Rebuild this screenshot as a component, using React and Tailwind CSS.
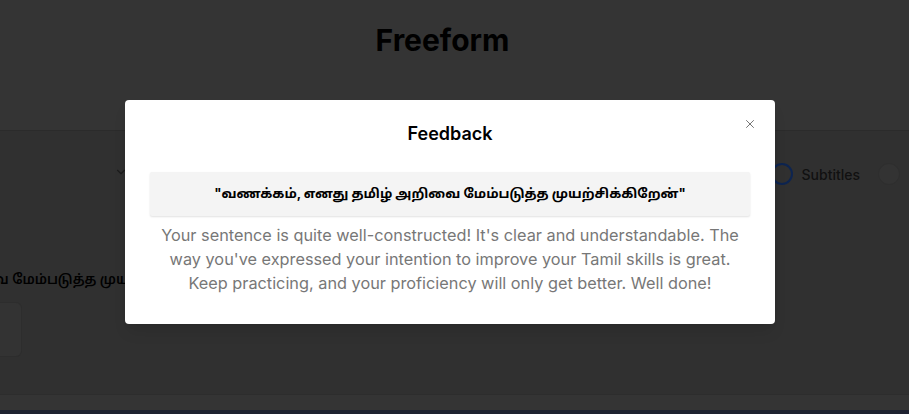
import { X, ChevronDown } from 'lucide-react';

const sentence = 'வணக்கம், எனது தமிழ் அறிவை மேம்படுத்த முயற்சிக்கிறேன்';
const tamilFont = { fontFamily: 'Inter, "Noto Sans Tamil", "Noto Sans", sans-serif' };

const FeedbackModal = () => (
    <div className="absolute inset-0 flex items-start justify-start pl-[125px] pt-[100px]">
        <div className="relative w-[650px] h-[224px] bg-white rounded-[4px] px-[25px] shadow-lg">
            <button className="absolute right-[18px] top-[17px] text-[#6b6b6b]">
                <X className="w-[14px] h-[14px]" strokeWidth={1.6} />
            </button>
            <h2 className="pt-[22px] text-center text-[18px] leading-[24px] font-semibold text-black">
                Feedback
            </h2>
            <div className="mt-[26px] h-[44px] flex items-center justify-center bg-[#f4f4f4] rounded-[2px] shadow-[0_1px_2px_rgba(0,0,0,0.12)]">
                <span className="whitespace-nowrap text-[13.2px] font-bold text-black" style={tamilFont}>
                    "{sentence}"
                </span>
            </div>
            <p className="mt-[7px] text-center text-[16.3px] leading-[24px] text-[#777777]">
                Your sentence is quite well-constructed! It's clear and understandable. The way you've expressed your intention to improve your Tamil skills is great. Keep practicing, and your proficiency will only get better. Well done!
            </p>
        </div>
    </div>
);

export default function App() {
    return (
        <div className="relative h-[414px] w-full overflow-hidden bg-[#303030] flex flex-col font-['Inter',sans-serif]">
            {/* ── Header ── */}
            <header className="h-[131px] shrink-0 bg-[#343434] border-b border-[#2b2b2b] flex justify-center pt-[20px] pr-[24px]">
                <h1 className="text-[30px] leading-[40px] font-bold text-black">Freeform</h1>
            </header>

            {/* ── Toolbar ── */}
            <div className="h-[84px] shrink-0 flex items-center justify-between pl-[114px] pr-[9px]">
                <ChevronDown className="w-[14px] h-[14px] text-[#1c1c1c] -mt-[2px]" strokeWidth={2} />
                <div className="flex items-center gap-[9px] mt-[2px]">
                    <div className="w-[22px] h-[22px] rounded-full border-[2px] border-[#0d2450]" />
                    <span className="text-[14px] font-medium text-[#111]">Subtitles</span>
                    <div className="ml-[9px] w-[22px] h-[22px] rounded-full bg-[#333333] border border-[#2e2e2e]" />
                </div>
            </div>

            {/* ── Message ── */}
            <div className="mt-[52px] whitespace-nowrap -ml-[228px] text-[13.5px] leading-[24px] text-black font-semibold" style={tamilFont}>
                {sentence}
            </div>
            <div className="mt-[11px] w-[22px] h-[55px] bg-[#333333] rounded-r-[6px] border-y border-r border-[#2d2d2d]" />

            <div className="flex-1" />
            <div className="h-[16px] shrink-0 bg-[#343434] border-t border-[#2d2d2d]" />
            <div className="h-[4px] shrink-0 bg-[#1e2230]" />

            <FeedbackModal />
        </div>
    );
}
